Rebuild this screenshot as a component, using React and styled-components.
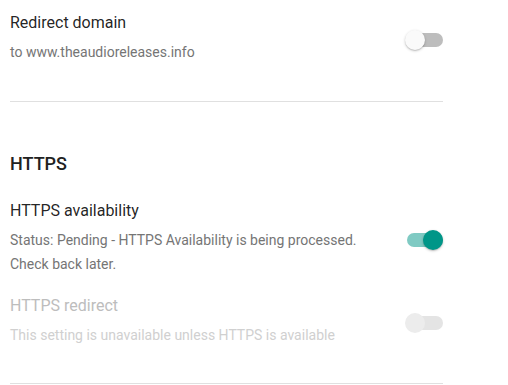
import React from "react";
import styled, { createGlobalStyle } from "styled-components";

const GlobalStyle = createGlobalStyle`
  body {
    margin: 0;
    background: #ffffff;
    font-family: Roboto, "Liberation Sans", Arial, sans-serif;
  }
`;

const Page = styled.div`
  width: 433px;
  margin-left: 10px;
`;

const Row = styled.div`
  display: flex;
  align-items: center;
  justify-content: space-between;
  padding-top: ${(p) => p.$top}px;
`;

const Text = styled.div`
  display: flex;
  flex-direction: column;
`;

const Title = styled.div`
  font-size: 16px;
  line-height: 24px;
  color: ${(p) => (p.$disabled ? "#bdbdbd" : "rgba(0, 0, 0, 0.87)")};
`;

const Subtitle = styled.div`
  margin-top: 5px;
  font-size: 14px;
  line-height: 24px;
  color: ${(p) => (p.$disabled ? "#d0d0d0" : "#757575")};
`;

const Divider = styled.hr`
  margin: ${(p) => p.$gap}px 0 0;
  border: 0;
  border-top: 1px solid #e0e0e0;
  height: 0;
`;

const Heading = styled.h2`
  margin: 50px 0 0;
  font-size: 18px;
  font-weight: 500;
  line-height: 24px;
  color: #212121;
`;

const SwitchWrap = styled.div`
  position: relative;
  width: 38px;
  height: 20px;
  margin-top: 5px;
  flex-shrink: 0;
`;

const Track = styled.div`
  position: absolute;
  left: 2px;
  right: 0;
  top: 3px;
  height: 14px;
  border-radius: 7px;
  background: ${(p) =>
    p.$disabled ? "#e4e4e4" : p.$on ? "rgba(0, 150, 136, 0.5)" : "#bdbdbd"};
`;

const Knob = styled.div`
  position: absolute;
  top: 0;
  left: ${(p) => (p.$on ? "18px" : "0")};
  width: 20px;
  height: 20px;
  border-radius: 50%;
  background: ${(p) =>
    p.$disabled ? "#ececec" : p.$on ? "#009688" : "#fafafa"};
  box-shadow: ${(p) =>
    p.$disabled
      ? "none"
      : "0 1px 3px rgba(0,0,0,0.2), 0 1px 1px rgba(0,0,0,0.12)"};
`;

const Switch = ({ on, disabled }) => (
  <SwitchWrap>
    <Track $on={on} $disabled={disabled} />
    <Knob $on={on} $disabled={disabled} />
  </SwitchWrap>
);

const Setting = ({ top, title, lines, on, disabled }) => (
  <Row $top={top}>
    <Text>
      <Title $disabled={disabled}>{title}</Title>
      <Subtitle $disabled={disabled}>
        {lines.map((l, i) => (
          <div key={i}>{l}</div>
        ))}
      </Subtitle>
    </Text>
    <Switch on={on} disabled={disabled} />
  </Row>
);

export default function App() {
  return (
    <Page>
      <GlobalStyle />
      <Setting
        top={11}
        title="Redirect domain"
        lines={["to www.theaudioreleases.info"]}
      />
      <Divider $gap={37} />
      <Heading>HTTPS</Heading>
      <Setting
        top={23}
        title="HTTPS availability"
        lines={[
          "Status: Pending - HTTPS Availability is being processed.",
          "Check back later.",
        ]}
        on
      />
      <Setting
        top={18}
        title="HTTPS redirect"
        lines={["This setting is unavailable unless HTTPS is available"]}
        disabled
      />
      <Divider $gap={36} />
    </Page>
  );
}
